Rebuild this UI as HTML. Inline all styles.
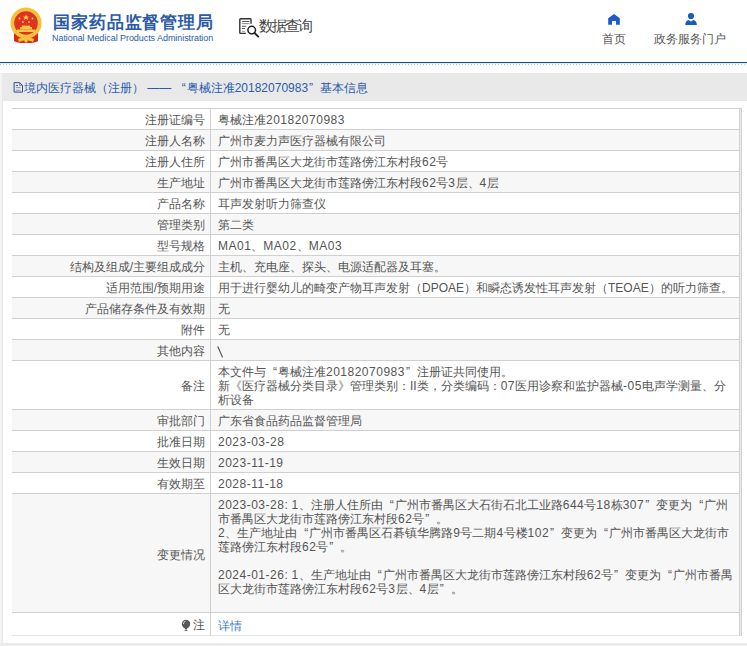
<!DOCTYPE html>
<html><head><meta charset="utf-8">
<style>
*{margin:0;padding:0;box-sizing:border-box}
html,body{width:747px;height:646px;overflow:hidden;background:#fff;font-family:"Liberation Sans",sans-serif;color:#555}
.abs{position:absolute}
#title{left:53px;top:13px;font-size:17px;letter-spacing:0.9px;font-weight:bold;color:#2b5aa6;white-space:nowrap;line-height:20px}
#etitle{left:52px;top:32px;font-size:9px;letter-spacing:-0.06px;color:#2a5caa;white-space:nowrap;line-height:12px}
#query{left:259px;top:16px;font-size:15px;letter-spacing:-2px;color:#444;line-height:20px}
.nav{font-size:12px;color:#555;line-height:16px;white-space:nowrap}
#bline{left:0;top:62px;width:747px;height:1px;background:#1f4b7c}
#dline{left:0;top:63px;width:747px;height:1px;background:#daf1fa}
#dline2{left:0;top:64px;width:747px;height:1px;background:repeating-linear-gradient(90deg,#b3c7e3 0 1px,#fff 1px 3px)}
#panel{left:2px;top:73px;width:760px;height:573px;border:1px solid #e6e6e6;border-bottom:none;background:#fff}
#pbot{left:0;top:643px;width:747px;height:3px;background:#ebebeb}
#phead{left:2px;top:73px;width:760px;height:28px;background:#e9e9e9}
#ptitle{left:24px;top:80px;font-size:12px;color:#2a5caa;white-space:nowrap;line-height:16px}
.row{position:absolute;left:12px;width:728px;border-top:1px solid #d0d0d0}
.row.g{background:#f7f7f7}
.lab{position:absolute;left:0;width:193px;text-align:right;top:4px;font-size:12px;line-height:14px;white-space:nowrap}
.val{position:absolute;left:206px;top:4px;font-size:12px;line-height:14px;white-space:nowrap}
.vdiv{position:absolute;left:210px;top:108px;width:1px;height:528px;background:#d0d0d0}
i.lq,i.rq{font-style:normal;display:inline-block;width:12px}i.lq{text-align:right;padding-right:1px}i.rq{text-align:left;padding-left:1px}
b.d{font-weight:normal;letter-spacing:0.5px}
</style></head><body>
<!-- emblem -->
<svg class="abs" style="left:8px;top:7px" width="38" height="40" viewBox="0 0 38 40">
  <path d="M6 25 L6 34 Q10 36.5 18 36 Q26 36.5 30 34 L30 25 Z" fill="#d42a1e"/>
  <circle cx="18" cy="16" r="15.6" fill="#f2c23c"/>
  <circle cx="18" cy="16" r="11.8" fill="#e1321f"/>
  <rect x="9" y="22.5" width="18" height="2.5" fill="#f3c84a"/>
  <rect x="12" y="20" width="12" height="2.5" fill="#f3c84a"/>
  <rect x="14" y="18.6" width="8" height="1.6" fill="#f3c84a"/>
  <path d="M18 7.6 L18.9 9.6 L21 9.7 L19.4 11 L20 13 L18 11.8 L16 13 L16.6 11 L15 9.7 L17.1 9.6 Z" fill="#f6d24a"/>
  <circle cx="11.5" cy="11.5" r="0.9" fill="#f6d24a"/>
  <circle cx="24.5" cy="11.5" r="0.9" fill="#f6d24a"/>
  <circle cx="15" cy="15" r="0.9" fill="#f6d24a"/>
  <circle cx="21" cy="15" r="0.9" fill="#f6d24a"/>
  <path d="M10 32 Q18 27.5 26 32 L25 35 Q18 31.5 11 35 Z" fill="#f2c23c"/>
  <path d="M16 34 L18 31.5 L20 34 L18 36 Z" fill="#f2c23c"/>
</svg>
<div id="title" class="abs">国家药品监督管理局</div>
<div id="etitle" class="abs">National Medical Products Administration</div>
<svg class="abs" style="left:238px;top:17px" width="22" height="22" viewBox="0 0 22 22">
  <path d="M13 6.7 V2.6 Q13 1.8 12.2 1.8 H2.6 Q1.8 1.8 1.8 2.6 V15.6 Q1.8 16.4 2.6 16.4 H7.9" fill="none" stroke="#333" stroke-width="1.4"/>
  <path d="M3.9 4.45 H11.5" stroke="#444" stroke-width="0.9"/>
  <path d="M3.9 6.6 H11.5" stroke="#999" stroke-width="1.2"/>
  <path d="M3.9 9.3 H8.1 M3.9 11.5 H7" stroke="#444" stroke-width="0.9"/>
  <path d="M3.9 14.3 H7" stroke="#999" stroke-width="1"/>
  <circle cx="13.7" cy="13.1" r="3.8" fill="none" stroke="#222" stroke-width="1.5"/>
  <path d="M16.6 16 L20.2 19.6" stroke="#222" stroke-width="1.9" stroke-linecap="round"/>
</svg>
<div id="query" class="abs">数据查询</div>
<svg class="abs" style="left:608px;top:13px" width="13" height="13" viewBox="0 0 13 13">
  <path d="M0.2 5.2 L6 1 L11.8 5.2 V11.8 H8 V7.9 H4 V11.8 H0.2 Z" fill="#1a5bc6"/>
</svg>
<div class="abs nav" style="left:602px;top:31px">首页</div>
<svg class="abs" style="left:685px;top:12px" width="13" height="14" viewBox="0 0 13 14">
  <circle cx="6" cy="4" r="3.1" fill="#1a5bc6"/>
  <path d="M0.2 13 Q0.4 8.6 3.6 8 L6 9.6 L8.4 8 Q11.6 8.6 11.9 13 Z" fill="#1a5bc6"/>
</svg>
<div class="abs nav" style="left:654px;top:31px">政务服务门户</div>
<div id="bline" class="abs"></div>
<div id="dline" class="abs"></div><div id="dline2" class="abs"></div>
<div id="panel" class="abs"></div>
<div id="phead" class="abs"></div><div id="pbot" class="abs"></div><div class="abs" style="left:0;top:73px;width:2px;height:570px;background:#f4f4f4"></div>
<svg class="abs" style="left:13px;top:82px" width="10" height="11" viewBox="0 0 10 11">
  <path d="M1.1 0.6 H6.6 L9.5 3.4 V10.1 H1.1 Z" fill="none" stroke="#2d4f8c" stroke-width="1"/>
  <path d="M6.6 0.6 V3.4 H9.5" fill="none" stroke="#3d6ab0" stroke-width="0.8"/>
  <path d="M2.9 3.5 H5" stroke="#2d4f8c" stroke-width="0.9"/>
  <path d="M2.9 5.6 H7.6 M2.9 8.3 H7.6" stroke="#7f8fb0" stroke-width="0.9"/>
</svg>
<div id="ptitle" class="abs">境内医疗器械（注册）&nbsp;——&nbsp;<i class="lq">“</i>粤械注准20182070983<i class="rq">”</i>基本信息</div>

<div id="rows">
<div class="row" style="top:108px;height:21px"><div class="lab">注册证编号</div><div class="val">粤械注准<b class="d">20182070983</b></div></div>
<div class="row g" style="top:129px;height:21px"><div class="lab">注册人名称</div><div class="val">广州市麦力声医疗器械有限公司</div></div>
<div class="row" style="top:150px;height:21px"><div class="lab">注册人住所</div><div class="val">广州市番禺区大龙街市莲路傍江东村段<b class="d">62</b>号</div></div>
<div class="row g" style="top:171px;height:21px"><div class="lab">生产地址</div><div class="val">广州市番禺区大龙街市莲路傍江东村段<b class="d">62</b>号<b class="d">3</b>层、<b class="d">4</b>层</div></div>
<div class="row" style="top:192px;height:21px"><div class="lab">产品名称</div><div class="val">耳声发射听力筛查仪</div></div>
<div class="row g" style="top:213px;height:21px"><div class="lab">管理类别</div><div class="val">第二类</div></div>
<div class="row" style="top:234px;height:21px"><div class="lab">型号规格</div><div class="val"><b class="d">MA01</b>、<b class="d">MA02</b>、<b class="d">MA03</b></div></div>
<div class="row g" style="top:255px;height:21px"><div class="lab">结构及组成/主要组成成分</div><div class="val">主机、充电座、探头、电源适配器及耳塞。</div></div>
<div class="row" style="top:276px;height:21px"><div class="lab">适用范围/预期用途</div><div class="val">用于进行婴幼儿的畸变产物耳声发射（DPOAE）和瞬态诱发性耳声发射（TEOAE）的听力筛查。</div></div>
<div class="row g" style="top:297px;height:21px"><div class="lab">产品储存条件及有效期</div><div class="val">无</div></div>
<div class="row" style="top:318px;height:21px"><div class="lab">附件</div><div class="val">无</div></div>
<div class="row g" style="top:339px;height:21px"><div class="lab">其他内容</div><svg style="position:absolute;left:205px;top:6px" width="8" height="13" viewBox="0 0 8 13"><path d="M0.9 0.8 L5.4 10.9" stroke="#555" stroke-width="1.15" stroke-linecap="round"/></svg></div>
<div class="row" style="top:360px;height:49px"><div class="lab" style="top:18px">备注</div><div class="val">本文件与<i class="lq">“</i>粤械注准<b class="d">20182070983</b><i class="rq">”</i>注册证共同使用。<br>新《医疗器械分类目录》管理类别：II类，分类编码：<b class="d">07</b>医用诊察和监护器械<b class="d">-05</b>电声学测量、分<br>析设备</div></div>
<div class="row g" style="top:409px;height:21px"><div class="lab">审批部门</div><div class="val">广东省食品药品监督管理局</div></div>
<div class="row" style="top:430px;height:21px"><div class="lab">批准日期</div><div class="val"><b class="d">2023-03-28</b></div></div>
<div class="row g" style="top:451px;height:21px"><div class="lab">生效日期</div><div class="val"><b class="d">2023-11-19</b></div></div>
<div class="row" style="top:472px;height:21px"><div class="lab">有效期至</div><div class="val"><b class="d">2028-11-18</b></div></div>
<div class="row g" style="top:493px;height:119px"><div class="lab" style="top:54px">变更情况</div><div class="val"><b class="d">2023-03-28:</b> <b class="d">1</b>、注册人住所由<i class="lq">“</i>广州市番禺区大石街石北工业路<b class="d">644</b>号<b class="d">18</b>栋<b class="d">307</b><i class="rq">”</i>变更为<i class="lq">“</i>广州<br>市番禺区大龙街市莲路傍江东村段<b class="d">62</b>号<i class="rq">”</i>。<br><b class="d">2</b>、生产地址由<i class="lq">“</i>广州市番禺区石碁镇华腾路<b class="d">9</b>号二期<b class="d">4</b>号楼<b class="d">102</b><i class="rq">”</i>变更为<i class="lq">“</i>广州市番禺区大龙街市<br>莲路傍江东村段<b class="d">62</b>号<i class="rq">”</i>。<br><br><b class="d">2024-01-26:</b> <b class="d">1</b>、生产地址由<i class="lq">“</i>广州市番禺区大龙街市莲路傍江东村段<b class="d">62</b>号<i class="rq">”</i>变更为<i class="lq">“</i>广州市番禺<br>区大龙街市莲路傍江东村段<b class="d">62</b>号<b class="d">3</b>层、<b class="d">4</b>层<i class="rq">”</i>。</div></div>
<div class="row" style="top:612px;height:24px;border-bottom:1px solid #e6e6e6"><svg style="position:absolute;left:169px;top:6px" width="10" height="13" viewBox="0 0 10 13"><circle cx="5" cy="5" r="4.2" fill="#595959"/><path d="M1.6 7.4 Q4 9 5 11.2 Q6 9 8.4 7.4 Z" fill="#595959"/><rect x="3.6" y="11" width="2.8" height="1.1" fill="#777"/><path d="M2.4 5 Q2.4 2.6 4.6 2.2" stroke="#fff" stroke-width="0.9" fill="none" opacity="0.8"/></svg><div class="lab" style="top:5px">注</div><div class="val" style="top:6px;color:#3a80d0">详情</div></div>
</div>
<div class="vdiv"></div>
<div class="abs" style="left:739px;top:108px;width:3px;height:528px;background:#d0d0d0;border-left:1px solid #d0d0d0;border-right:1px solid #d0d0d0;background:#ececec"></div><div class="abs" style="left:739px;top:108px;width:3px;height:1px;background:#d0d0d0"></div>
</body></html>
